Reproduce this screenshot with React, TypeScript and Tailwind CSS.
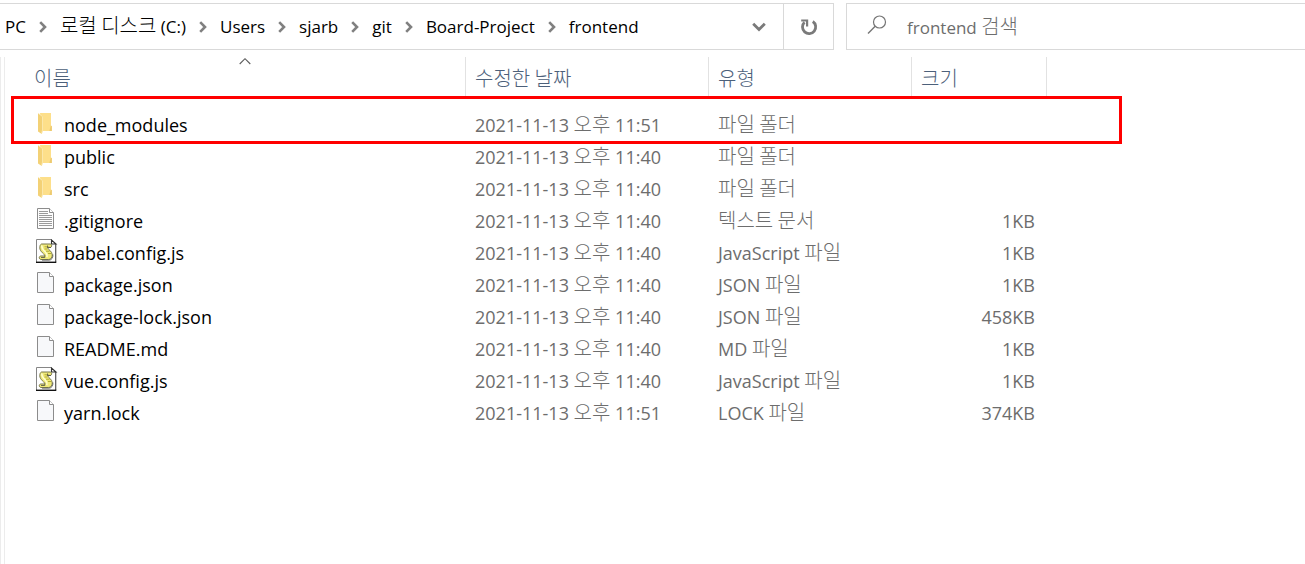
import { Fragment } from "react";

type IconKind = "folder" | "text" | "script" | "blank";

interface FileEntry {
  name: string;
  icon: IconKind;
  modified: string;
  kind: string;
  size: string;
  marked?: boolean;
}

const files: FileEntry[] = [
  { name: "node_modules", icon: "folder", modified: "2021-11-13 오후 11:51", kind: "파일 폴더", size: "", marked: true },
  { name: "public", icon: "folder", modified: "2021-11-13 오후 11:40", kind: "파일 폴더", size: "" },
  { name: "src", icon: "folder", modified: "2021-11-13 오후 11:40", kind: "파일 폴더", size: "" },
  { name: ".gitignore", icon: "text", modified: "2021-11-13 오후 11:40", kind: "텍스트 문서", size: "1KB" },
  { name: "babel.config.js", icon: "script", modified: "2021-11-13 오후 11:40", kind: "JavaScript 파일", size: "1KB" },
  { name: "package.json", icon: "blank", modified: "2021-11-13 오후 11:40", kind: "JSON 파일", size: "1KB" },
  { name: "package-lock.json", icon: "blank", modified: "2021-11-13 오후 11:40", kind: "JSON 파일", size: "458KB" },
  { name: "README.md", icon: "blank", modified: "2021-11-13 오후 11:40", kind: "MD 파일", size: "1KB" },
  { name: "vue.config.js", icon: "script", modified: "2021-11-13 오후 11:40", kind: "JavaScript 파일", size: "1KB" },
  { name: "yarn.lock", icon: "blank", modified: "2021-11-13 오후 11:51", kind: "LOCK 파일", size: "374KB" },
];

const path = ["PC", "로컬 디스크 (C:)", "Users", "sjarb", "git", "Board-Project", "frontend"];

const columns = ["이름", "수정한 날짜", "유형", "크기"];

/* Hangul is set larger and lighter than the Latin text beside it. */
function Mixed({ text }: { text: string }) {
  return (
    <>
      {text.split(/([가-힣]+(?: [가-힣]+)*)/).map((part, i) =>
        i % 2 === 1 ? (
          <span key={i} className="font-['Noto_Sans_CJK_KR',sans-serif] text-xl leading-none font-light">
            {part}
          </span>
        ) : (
          <Fragment key={i}>{part}</Fragment>
        ),
      )}
    </>
  );
}

function FolderIcon() {
  return (
    <svg width="24" height="24" viewBox="0 0 24 24" aria-hidden="true">
      <path d="M6 2h11v12.500l.8.8V20H8z" fill="#fddf8a" />
      <path d="M16.800 14.500l1 .8V20h-2.400z" fill="#ecca70" />
      <path d="M4 2.200L8.800 5.500V19l-1 4L4 20.500z" fill="#f3d176" />
      <path d="M4.300 2.300L8.500 5.600V19l-.9 3.600" fill="none" stroke="#fdeeb9" strokeWidth=".8" />
    </svg>
  );
}

function PageIcon({ lined }: { lined?: boolean }) {
  return (
    <svg width="24" height="24" viewBox="0 0 24 24" aria-hidden="true">
      <path d="M3.500 1.500h12l4 4v16h-16z" fill={lined ? "#fdfdfd" : "#f7f8fa"} stroke="#8c8c8c" />
      <path d="M15.500 1.500v4h4" fill="#fff" stroke="#8c8c8c" />
      {lined && (
        <path
          d="M5 4.500h9M5 6.500h9M5 8.500h13M5 10.500h13M5 12.500h13M5 14.500h13M5 16.500h13M5 18.500h13"
          stroke="#9a9a9a"
        />
      )}
    </svg>
  );
}

function ScriptIcon() {
  return (
    <svg width="24" height="24" viewBox="0 0 24 24" aria-hidden="true">
      <path d="M2.500 .500h15l4.500 4.500v18h-19.500z" fill="#fff" />
      <path d="M2.500 23V.500h15" fill="none" stroke="#868686" />
      <path d="M21.700 5v18" stroke="#555" strokeWidth="1.200" />
      <path d="M2 23.300h20.300" stroke="#111" strokeWidth="1.400" />
      <path d="M17.500 1v4h4.500z" fill="#fff" stroke="#333" strokeWidth="1.100" />
      <path
        d="M7.500 5h8.800c1.700.3 1.900 3 .2 3.400h-3.200c.3 1.700 5 3.800 5 7.500 0 2.800-1.500 4.600-3.800 4.600H7c-2.200-.2-2.300-3.300-.2-3.500h4c.5-1.800-5-4-5-8.200C5.800 7 6.200 5.600 7.500 5z"
        fill="#f0ea78"
        stroke="#77774a"
        strokeWidth="1"
      />
      <path d="M8 6.500c-.8 2.600 1 4.300 3.300 6.500 1.600 1.600 2 3 1.600 5.200" fill="none" stroke="#fffed0" strokeWidth="1.600" />
      <path d="M10.500 7.800h4M10.500 10h3M12 12.200h3.500M14 14.500h3" stroke="#a8a030" strokeWidth=".9" />
      <path d="M13.500 6.500v2h3.500M7 18.500h3.800v-1.800" fill="none" stroke="#5c5c48" strokeWidth=".9" />
      <path d="M18.900 15.500c.2 3.300-1.300 5.600-3.900 5.700H8" fill="none" stroke="#555" strokeWidth=".8" />
    </svg>
  );
}

function FileIcon({ kind }: { kind: IconKind }) {
  if (kind === "folder") return <FolderIcon />;
  if (kind === "script") return <ScriptIcon />;
  return <PageIcon lined={kind === "text"} />;
}

function Separator() {
  return (
    <svg width="8" height="12" viewBox="0 0 8 12" aria-hidden="true" className="shrink-0">
      <path d="M1.200 1.200L6 6l-4.800 4.800" fill="none" stroke="#808080" strokeWidth="2.600" />
    </svg>
  );
}

function AddressBar() {
  return (
    <div className="flex min-w-0 border border-l-0 border-[#d9d9d9]">
      <nav aria-label="경로" className="flex min-w-0 flex-1 items-center pl-[5px]">
        <ol className="flex items-center gap-[13px]">
          {path.map((part, i) => (
            <li key={part} className="flex items-center gap-[13px] whitespace-nowrap text-black">
              {i > 0 && <Separator />}
              <a href="#">
                <Mixed text={part} />
              </a>
            </li>
          ))}
        </ol>
      </nav>
      <button type="button" aria-label="이전 위치" className="flex w-12 items-center justify-center">
        <svg width="14" height="10" viewBox="0 0 14 10" aria-hidden="true">
          <path d="M1.200 1.700L7 7.500l5.800-5.800" fill="none" stroke="#7a7a7a" strokeWidth="2.800" />
        </svg>
      </button>
      <button
        type="button"
        aria-label="새로 고침"
        className="flex w-[50px] items-center justify-center border-l border-[#d9d9d9]"
      >
        <svg width="18" height="18" viewBox="0 0 18 18" aria-hidden="true">
          <path d="M12.800 3.500A6.600 6.600 0 1 1 4.500 4.200" fill="none" stroke="#7a7a7a" strokeWidth="2.800" />
          <path d="M1.200 1.400h7v7H6V3.600H1.200z" fill="#7a7a7a" />
        </svg>
      </button>
    </div>
  );
}

function SearchBox() {
  return (
    <form role="search" className="flex min-w-0 items-center border border-r-0 border-[#d9d9d9] pl-5">
      <svg width="20" height="20" viewBox="0 0 20 20" aria-hidden="true" className="mb-1 shrink-0">
        <circle cx="12.500" cy="7" r="6" fill="none" stroke="#757575" strokeWidth="1.200" />
        <path d="M8.200 11.300L1 18.500" stroke="#757575" strokeWidth="1.400" />
      </svg>
      <label htmlFor="search" className="cursor-text pt-0.5 pl-5 whitespace-nowrap text-[#6d6d6d]">
        <Mixed text="frontend 검색" />
      </label>
      <input id="search" type="search" className="min-w-0 flex-1 outline-none" />
    </form>
  );
}

export default function App() {
  return (
    <div className="flex min-h-screen flex-col bg-white pt-[3px] font-['Open_Sans','Noto_Sans_CJK_KR',sans-serif] text-lg leading-8">
      <header className="grid h-[47px] grid-cols-[834fr_459fr] gap-3 text-[17px]">
        <AddressBar />
        <SearchBox />
      </header>
      <main className="mt-[7px] flex flex-1 border-l border-[#ececec]">
        <div className="w-1 shrink-0 border-r border-[#ececec]" />
        <div className="pl-5">
          <table className="w-[1022px] table-fixed border-separate border-spacing-0 text-left">
            <colgroup>
              <col className="w-[441px]" />
              <col className="w-[243px]" />
              <col className="w-[203px]" />
              <col className="w-[135px]" />
            </colgroup>
            <thead>
              <tr>
                {columns.map((label, i) => (
                  <th key={label} scope="col" className="p-0 pb-3 font-normal text-[#4c607a]">
                    <div className="relative flex h-10 items-center border-r border-[#e2e2e2] px-[9px] pt-0.5">
                      <Mixed text={label} />
                      {i === 0 && (
                        <svg
                          width="12"
                          height="8"
                          viewBox="0 0 12 8"
                          aria-hidden="true"
                          className="absolute top-0 left-1/2 -translate-x-1/2"
                        >
                          <path d="M.7 7L6 1.700 11.300 7" fill="none" stroke="#5c5c5c" strokeWidth="1.100" />
                        </svg>
                      )}
                    </div>
                  </th>
                ))}
              </tr>
            </thead>
            <tbody className="text-[#6d6d6d]">
              {files.map((file) => (
                <tr key={file.name} className="relative h-8">
                  <td className="p-0 px-[9px] text-black">
                    <div className="flex h-8 items-start gap-1.5">
                      <span className="shrink-0 pt-0.5">
                        <span className="block size-6">
                          <FileIcon kind={file.icon} />
                        </span>
                      </span>
                      <span>{file.name}</span>
                    </div>
                    {file.marked && (
                      <span className="pointer-events-none absolute -top-[13px] -right-[75px] -bottom-[3px] -left-[14px] border-3 border-[#ff0000]" />
                    )}
                  </td>
                  <td className="p-0 px-[9px] whitespace-nowrap">
                    <Mixed text={file.modified} />
                  </td>
                  <td className="p-0 px-[9px] whitespace-nowrap">
                    <Mixed text={file.kind} />
                  </td>
                  <td className="p-0 pr-3 text-right">{file.size}</td>
                </tr>
              ))}
            </tbody>
          </table>
        </div>
      </main>
    </div>
  );
}
